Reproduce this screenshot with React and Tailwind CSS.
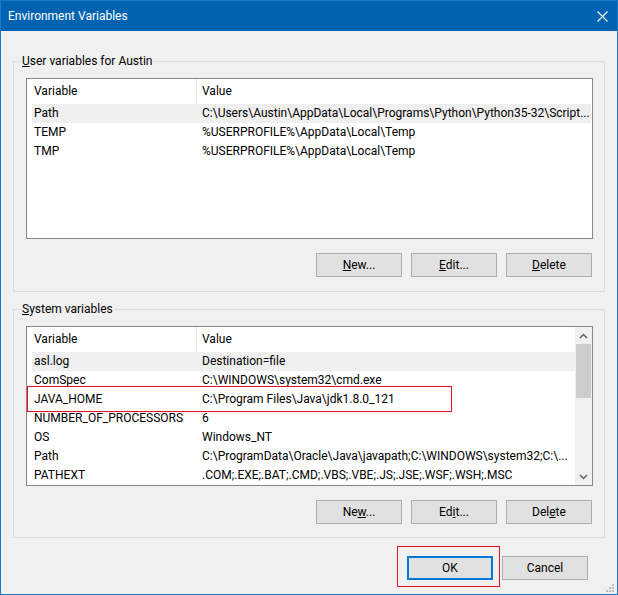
import React from 'react';

const font = { fontFamily: "Roboto, 'Noto Sans', sans-serif" };

const userRows = [
  ['Path', 'C:\\Users\\Austin\\AppData\\Local\\Programs\\Python\\Python35-32\\Script...'],
  ['TEMP', '%USERPROFILE%\\AppData\\Local\\Temp'],
  ['TMP', '%USERPROFILE%\\AppData\\Local\\Temp'],
];

const systemRows = [
  ['asl.log', 'Destination=file'],
  ['ComSpec', 'C:\\WINDOWS\\system32\\cmd.exe'],
  ['JAVA_HOME', 'C:\\Program Files\\Java\\jdk1.8.0_121'],
  ['NUMBER_OF_PROCESSORS', '6'],
  ['OS', 'Windows_NT'],
  ['Path', 'C:\\ProgramData\\Oracle\\Java\\javapath;C:\\WINDOWS\\system32;C:\\...'],
  ['PATHEXT', '.COM;.EXE;.BAT;.CMD;.VBS;.VBE;.JS;.JSE;.WSF;.WSH;.MSC'],
];

const Header = () => (
  <div className="flex h-[25px] bg-white">
    <div className="w-[169px] pl-[7px] leading-[25px]">Variable</div>
    <div className="w-px h-[24px] bg-[#e5e5e5]" />
    <div className="flex-1 pl-[5px] leading-[25px]">Value</div>
  </div>
);

const Row = ({ name, value, selected, marked }) => (
  <div className={selected ? 'relative flex h-[19px] ml-[5px] leading-[19px] bg-[#efefef]' : 'relative flex h-[19px] ml-[5px] leading-[19px]'}>
    <div className="w-[168px] pl-[2px] whitespace-nowrap overflow-hidden">{name}</div>
    <div className="flex-1 pl-[2px] whitespace-nowrap overflow-hidden">{value}</div>
    {marked && (
      <div className="absolute left-[-5px] top-[-4px] w-[425px] h-[26px] border border-[#e81123] pointer-events-none" />
    )}
  </div>
);

const Chevron = ({ down }) => (
  <svg width="9" height="6" viewBox="0 0 9 6">
    <path
      d={down ? 'M1 1 L4.5 4.5 L8 1' : 'M1 5 L4.5 1.5 L8 5'}
      fill="none"
      stroke="#606060"
      strokeWidth="1.5"
    />
  </svg>
);

const Btn = ({ children, primary }) => (
  <button
    className={
      primary
        ? 'w-[86px] h-[24px] bg-[#e1e1e1] border-2 border-[#0078d7] text-black text-center'
        : 'w-[86px] h-[24px] bg-[#e1e1e1] border border-[#adadad] text-black text-center'
    }
  >
    {children}
  </button>
);

const Buttons = ({ n, e, d }) => (
  <div className="flex justify-end gap-[9px] mt-[14px] mr-[1px]">
    <Btn>{n}</Btn>
    <Btn>{e}</Btn>
    <Btn>{d}</Btn>
  </div>
);

export default function App() {
  return (
    <div style={font} className="w-[618px] h-[595px] border border-[#1979ca] flex flex-col overflow-hidden relative text-[12px] text-black">
      {/* title bar */}
      <div className="h-[30px] bg-[#0063b1] flex items-center justify-between pl-[7px] pr-[9px] text-white">
        <span className="leading-[16px]">Environment Variables</span>
        <svg width="11" height="11" viewBox="0 0 11 11" className="mt-[1px]">
          <path d="M0.5 0.5 L10.5 10.5 M10.5 0.5 L0.5 10.5" stroke="#fff" strokeWidth="1.1" />
        </svg>
      </div>

      <div className="flex-1 bg-[#f0f0f0] px-[12px] pt-[22px]">
        {/* user variables */}
        <fieldset className="border border-[#dcdcdc] pl-[7px] pr-[11px] pt-[9px] pb-[14px]">
          <legend className="px-[1px] leading-[16px]">
            <span className="underline">U</span>ser variables for Austin
          </legend>
          <div className="ml-[5px]">
            <div className="h-[161px] border border-[#828790] bg-white pr-[1px]">
              <Header />
              {userRows.map(([k, v], i) => (
                <Row key={k} name={k} value={v} selected={i === 0} />
              ))}
            </div>
            <Buttons
              n={<><span className="underline">N</span>ew...</>}
              e={<><span className="underline">E</span>dit...</>}
              d={<><span className="underline">D</span>elete</>}
            />
          </div>
        </fieldset>

        {/* system variables */}
        <fieldset className="mt-[9px] border border-[#dcdcdc] pl-[7px] pr-[11px] pt-[9px] pb-[13px]">
          <legend className="px-[1px] leading-[16px]">
            <span className="underline">S</span>ystem variables
          </legend>
          <div className="ml-[5px]">
            <div className="h-[160px] border border-[#828790] bg-white flex">
              <div className="flex-1 flex flex-col">
                <Header />
                {systemRows.map(([k, v], i) => (
                  <Row key={k} name={k} value={v} selected={i === 0} marked={k === 'JAVA_HOME'} />
                ))}
              </div>
              <div className="w-[17px] bg-[#f0f0f0] flex flex-col">
                <div className="h-[17px] flex items-center justify-center">
                  <Chevron />
                </div>
                <div className="h-[54px] mx-px bg-[#cdcdcd]" />
                <div className="flex-1" />
                <div className="h-[17px] flex items-center justify-center">
                  <Chevron down />
                </div>
              </div>
            </div>
            <Buttons
              n={<>Ne<span className="underline">w</span>...</>}
              e={<>Ed<span className="underline">i</span>t...</>}
              d={<>Del<span className="underline">e</span>te</>}
            />
          </div>
        </fieldset>

        {/* dialog buttons */}
        <div className="flex justify-end gap-[9px] mt-[18px] pr-[17px]">
          <div className="relative">
            <Btn primary>OK</Btn>
            <div className="absolute left-[-10px] top-[-10px] w-[103px] h-[41px] border border-[#e81123] pointer-events-none" />
          </div>
          <Btn>Cancel</Btn>
        </div>
      </div>

      {/* size grip */}
      <svg width="10" height="10" viewBox="0 0 10 10" className="absolute right-[2px] bottom-[1px]">
        <g fill="#bcbcbc">
          <rect x="7" y="1" width="2" height="2" />
          <rect x="4" y="4" width="2" height="2" />
          <rect x="7" y="4" width="2" height="2" />
          <rect x="1" y="7" width="2" height="2" />
          <rect x="4" y="7" width="2" height="2" />
          <rect x="7" y="7" width="2" height="2" />
        </g>
      </svg>
    </div>
  );
}
